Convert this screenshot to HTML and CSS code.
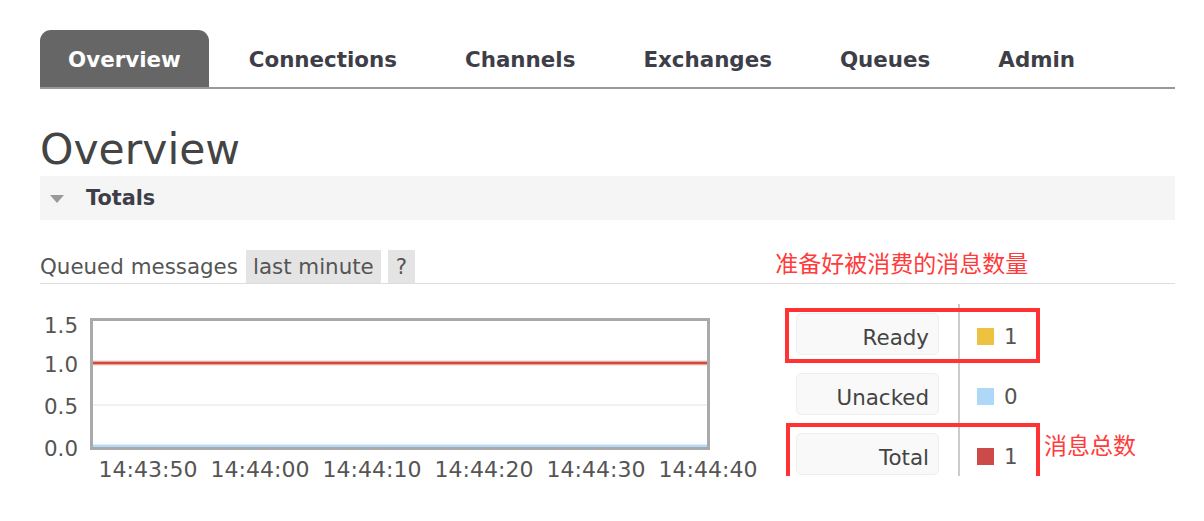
FILE: index.html
```html
<!DOCTYPE html>
<html lang="en">
<head>
<meta charset="utf-8">
<title>RabbitMQ Overview</title>
<link rel="stylesheet" href="styles.css">
</head>
<body>
<div class="page">
  <nav class="tabs">
    <a class="tab active">Overview</a>
    <a class="tab">Connections</a>
    <a class="tab">Channels</a>
    <a class="tab">Exchanges</a>
    <a class="tab">Queues</a>
    <a class="tab">Admin</a>
  </nav>

  <h1 class="title">Overview</h1>

  <div class="section-bar">
    <span class="tri"></span>
    <span class="section-name">Totals</span>
  </div>

  <div class="queued-row">
    <span class="queued-label">Queued messages</span>
    <span class="pill">last minute</span>
    <span class="pill help">?</span>
    <span class="note note-ready">准备好被消费的消息数量</span>
  </div>

  <div class="chart-row">
    <svg class="chart" width="725" height="182" viewBox="0 0 725 182">
      <line x1="52" y1="105" x2="668" y2="105" stroke="#eeeeee" stroke-width="1.5"/>
      <line x1="52" y1="63" x2="668" y2="63" stroke="#f6c9bd" stroke-width="5"/>
      <line x1="52" y1="63" x2="668" y2="63" stroke="#cc4b40" stroke-width="2.5"/>
      <line x1="52" y1="146" x2="668" y2="146" stroke="#b5dcf6" stroke-width="3"/>
      <rect x="51.5" y="19.5" width="617" height="129" fill="none" stroke="#aaaaaa" stroke-width="3"/>
      <g class="ylab" text-anchor="end">
        <text x="38" y="33">1.5</text>
        <text x="38" y="72">1.0</text>
        <text x="38" y="114">0.5</text>
        <text x="38" y="156">0.0</text>
      </g>
      <g class="xlab" text-anchor="middle">
        <text x="108" y="177">14:43:50</text>
        <text x="220" y="177">14:44:00</text>
        <text x="332" y="177">14:44:10</text>
        <text x="444" y="177">14:44:20</text>
        <text x="556" y="177">14:44:30</text>
        <text x="668" y="177">14:44:40</text>
      </g>
    </svg>

    <div class="legend">
      <div class="lrow">
        <div class="lcell"><span class="lbl">Ready</span></div>
        <div class="vcell"><span class="sw sw-ready"></span><span class="val">1</span></div>
        <span class="mark mark-ready"></span>
      </div>
      <div class="lrow">
        <div class="lcell"><span class="lbl">Unacked</span></div>
        <div class="vcell"><span class="sw sw-unacked"></span><span class="val">0</span></div>
      </div>
      <div class="lrow">
        <div class="lcell"><span class="lbl">Total</span></div>
        <div class="vcell"><span class="sw sw-total"></span><span class="val">1</span></div>
        <span class="mark mark-total"></span>
        <span class="note note-total">消息总数</span>
      </div>
    </div>
  </div>
</div>
</body>
</html>
```

FILE: styles.css
```css
html, body {
  margin: 0;
  padding: 0;
  background: #ffffff;
}

body {
  font-family: "DejaVu Sans", Verdana, sans-serif;
  color: #484848;
}

.page {
  padding: 30px 29px 0 40px;
}

/* tabs */
.tabs {
  display: flex;
  gap: 12px;
  height: 57px;
  border-bottom: 2px solid #999999;
}

.tab {
  display: flex;
  align-items: center;
  padding: 1px 28px 0;
  font-size: 21.4px;
  font-weight: bold;
  color: #3e3e48;
  border-radius: 11px 11px 0 0;
}

.tab.active {
  background: #666666;
  color: #ffffff;
}

/* title */
.title {
  margin: 36px 0 1px;
  font-size: 42.5px;
  line-height: 50px;
  font-weight: normal;
  color: #444444;
}

/* totals bar */
.section-bar {
  display: flex;
  align-items: center;
  gap: 22px;
  height: 44px;
  padding-left: 10px;
  background: #f5f5f5;
}

.tri {
  width: 0;
  height: 0;
  border-left: 7px solid transparent;
  border-right: 7px solid transparent;
  border-top: 8px solid #999999;
  margin-top: 2px;
}

.section-name {
  font-size: 20.8px;
  font-weight: bold;
  color: #3e3e48;
}

/* queued messages row */
.queued-row {
  display: flex;
  align-items: flex-end;
  margin-top: 30px;
  border-bottom: 1px solid #dddddd;
  font-size: 21.4px;
  color: #555555;
}

.queued-label {
  height: 33px;
  line-height: 33px;
  margin-right: 8px;
}

.pill {
  height: 33px;
  line-height: 33px;
  padding: 0 7px;
  background: #e4e4e4;
  margin-right: 7px;
}

.pill.help {
  padding: 0 8px;
}

.note {
  font-family: "Noto Sans CJK SC", "DejaVu Sans", sans-serif;
  font-size: 23px;
  color: #ff3b3b;
  line-height: 1;
  white-space: nowrap;
}

.note-ready {
  align-self: flex-start;
  margin-left: 353px;
  padding-top: 1px;
}

/* chart row */
.chart-row {
  display: flex;
  align-items: flex-start;
  margin-top: 16px;
}

.chart {
  display: block;
  flex: none;
}

.chart text {
  font-family: "DejaVu Sans", Verdana, sans-serif;
  font-size: 21.4px;
  fill: #555555;
}

.chart .xlab text {
  font-size: 22px;
}

/* legend */
.legend {
  flex: none;
  width: 390px;
  margin-left: 20px;
  margin-top: 4px;
  height: 172px;
  overflow: hidden;
}

.lrow {
  position: relative;
  display: flex;
  height: 60px;
}

.lcell {
  display: flex;
  align-items: center;
  width: 162px;
  padding-left: 11px;
  border-right: 2px solid #cccccc;
}

.lbl {
  box-sizing: border-box;
  width: 143px;
  height: 42px;
  line-height: 40px;
  padding: 4px 9px 0 0;
  text-align: right;
  font-size: 21.4px;
  color: #444444;
  background: #f9f9f9;
  border: 1px solid #efefef;
  border-radius: 5px;
}

.vcell {
  display: flex;
  align-items: center;
  gap: 10px;
  padding: 4px 0 0 17px;
  font-size: 21.4px;
  color: #555555;
}

.sw {
  width: 17px;
  height: 17px;
}

.sw-ready { background: #edc240; }
.sw-unacked { background: #afd8f8; }
.sw-total { background: #cb4b4b; }

/* annotation boxes */
.mark {
  position: absolute;
  border: 4px solid #ff3333;
  box-sizing: border-box;
}

.mark-ready {
  left: 0;
  top: 4px;
  width: 255px;
  height: 55px;
}

.mark-total {
  left: 1px;
  top: -1px;
  width: 254px;
  height: 80px;
}

.note-total {
  position: absolute;
  left: 259px;
  top: 9px;
}
```
